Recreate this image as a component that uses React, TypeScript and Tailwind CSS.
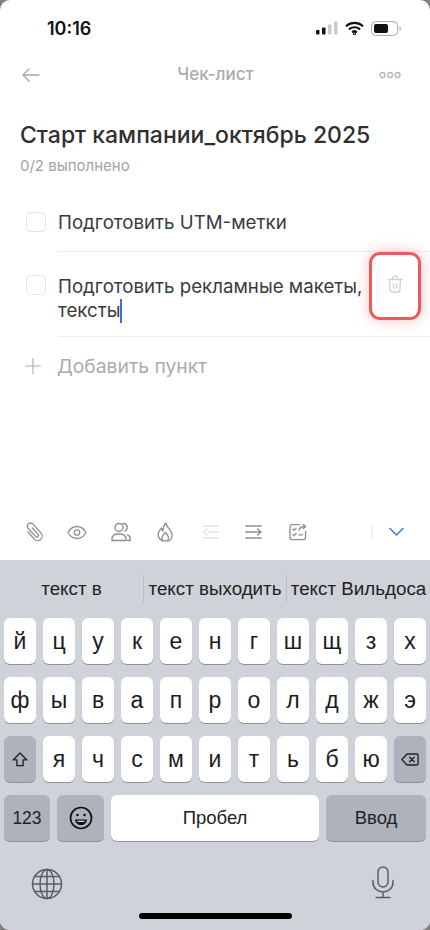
import { Plus } from "lucide-react";

const row1 = ["й", "ц", "у", "к", "е", "н", "г", "ш", "щ", "з", "х"];
const row2 = ["ф", "ы", "в", "а", "п", "р", "о", "л", "д", "ж", "э"];
const row3 = ["я", "ч", "с", "м", "и", "т", "ь", "б", "ю"];

const Key = ({ label }: { label: string }) => (
    <div className="h-[46px] rounded-[6px] bg-white shadow-[0_1px_0_#8f929a] flex items-center justify-center text-[23px] leading-none text-[#1c1c1e]">
        {label}
    </div>
);

const StatusIcons = () => (
    <div className="flex items-center gap-[7px]">
        <svg width="22" height="14" viewBox="0 0 22 14">
            <rect x="0" y="9" width="3.5" height="4.5" rx="1" fill="#111" />
            <rect x="6" y="6.5" width="3.5" height="7" rx="1" fill="#111" />
            <rect x="12" y="3.5" width="3.5" height="10" rx="1" fill="#c9c9c9" />
            <rect x="18" y="0.5" width="3.5" height="13" rx="1" fill="#c9c9c9" />
        </svg>
        <svg width="19" height="14" viewBox="0 0 19 14" fill="none" stroke="#111" strokeWidth="2.1" strokeLinecap="round">
            <path d="M1.6 4.8C6 .9 13 .9 17.4 4.8" />
            <path d="M4.6 7.9c2.7-2.3 7.1-2.3 9.8 0" />
            <path d="M7.7 10.9c1-.8 2.6-.8 3.6 0" />
            <circle cx="9.5" cy="12.6" r=".5" />
        </svg>
        <svg width="30" height="15" viewBox="0 0 30 15" fill="none">
            <rect x="0.6" y="0.6" width="26" height="13.8" rx="4" stroke="#a8a8a8" strokeWidth="1" />
            <rect x="3" y="3" width="14" height="9" rx="2" fill="#111" />
            <path d="M28.5 5.2c.9.3 1.3 1.2 1.3 2.3s-.4 2-1.3 2.3z" fill="#a8a8a8" />
        </svg>
    </div>
);

const Checkbox = () => <div className="w-[20px] h-[20px] shrink-0 rounded-[5px] border border-[#e4e4e6] bg-white" />;

const Toolbar = () => (
    <div className="h-[48px] pb-[8px] flex items-center relative">
        <div className="flex items-center text-[#8f8f8f]">
            <svg className="ml-[24px]" width="20" height="22" viewBox="0 0 20 22" fill="none" stroke="currentColor" strokeWidth="1.3" strokeLinecap="round">
                <g transform="rotate(-42 10 11)">
                    <path d="M5.5 7v9.5a4.5 4.5 0 0 0 9 0V4.5a3.2 3.2 0 0 0-6.400 0v11a1.700 1.700 0 0 0 3.400 0V7" />
                </g>
            </svg>
            <svg className="ml-[23px]" width="20" height="15" viewBox="0 0 22 16" fill="none" stroke="currentColor" strokeWidth="1.4">
                <path d="M1 8c2.600-4.400 5.900-6.600 10-6.600S18.400 3.600 21 8c-2.600 4.400-5.900 6.600-10 6.600S3.600 12.400 1 8z" />
                <circle cx="11" cy="8" r="3" />
            </svg>
            <svg className="ml-[24px]" width="20" height="20" viewBox="0 0 20 20" fill="none" stroke="currentColor" strokeWidth="1.4" strokeLinecap="round">
                <circle cx="8" cy="5.5" r="4" />
                <path d="M11.500 1.700c2.400-.9 4.700.8 4.700 3.600 0 1.800-.9 3.200-2.400 3.800" />
                <path d="M1 18.500v-1.700c0-3 2.600-4.800 7-4.800s7 1.800 7 4.800v1.700z" />
                <path d="M16.500 12.800c1.700.7 2.700 2 2.700 3.700v2h-2.500" />
            </svg>
            <svg className="ml-[26px]" width="17" height="21" viewBox="0 0 18 22" fill="none" stroke="currentColor" strokeWidth="1.4" strokeLinejoin="round">
                <path d="M9.500 1c.4 3.600 2.800 4.800 5 8.200 2.400 3.800 1.600 8.300-1.600 10.600H5.300C2 17.600 .4 14 2 10.200c.7-1.600 1.800-2.800 2.700-3.800.2 1.500.7 2.400 1.500 3C6.200 6.400 7.400 3.200 9.500 1z" />
                <path d="M6.200 19.800c-1.400-2-1.200-4 .1-5.700.8-1 2-1.900 2.800-3.300.7 1.700 2.500 3 3 5 .3 1.500-.1 3-1.200 4" />
            </svg>
            <svg className="ml-[28px] opacity-25" width="17" height="14" viewBox="0 0 17 14" fill="none" stroke="currentColor" strokeWidth="1.4" strokeLinecap="round">
                <path d="M1 1h15.500M1 13h15.500M6.500 7h10M1.500 7l3.500-3M1.500 7l3.500 3" />
            </svg>
            <svg className="ml-[26px]" width="17" height="14" viewBox="0 0 17 14" fill="none" stroke="currentColor" strokeWidth="1.4" strokeLinecap="round">
                <path d="M.7 1h15.500M.7 13h15.500M.7 7h15M16 7l-3.500-3M16 7l-3.500 3" />
            </svg>
            <svg className="ml-[27px]" width="18" height="18" viewBox="0 0 19 18" fill="none" stroke="currentColor" strokeWidth="1.4" strokeLinecap="round" strokeLinejoin="round">
                <path d="M11 1.200H3.500c-1.500 0-2.500 1-2.500 2.500v10.800c0 1.500 1 2.500 2.500 2.500h11.500c1.500 0 2.500-1 2.500-2.500V8" />
                <path d="M4 6l1.200 1.200L7.500 5M4 11.500l1.200 1.200 2.300-2.200M10.500 12h4" />
                <path d="M10.500 7c.6-2.500 2.500-3.800 6.500-3.800M15 1l2.500 2.200L15 5.500" />
            </svg>
        </div>
        <div className="absolute left-[371px] top-[13px] w-[2px] h-[14px] bg-[#efefef]" />
        <svg className="absolute left-[389px] top-[15px]" width="15" height="10" viewBox="0 0 15 10" fill="none" stroke="#3b82e0" strokeWidth="1.6" strokeLinecap="round" strokeLinejoin="round">
            <path d="M1 1.500 7.500 8 14 1.500" />
        </svg>
    </div>
);

const Keyboard = () => (
    <div className="bg-[#cfd2d9] h-[370px] flex flex-col font-['Liberation_Sans',sans-serif]">
        <div className="h-[58px] pt-[15px] flex items-start text-[18.8px] leading-[28px] text-[#222]">
            <div className="w-[143px] text-center">текст в</div>
            <div className="w-px h-[27px] bg-[#b9bcc5]" />
            <div className="w-[142px] text-center whitespace-nowrap">текст выходить</div>
            <div className="w-px h-[27px] bg-[#b9bcc5]" />
            <div className="flex-1 text-center whitespace-nowrap">текст Вильдоса</div>
        </div>
        <div className="px-[4px] flex flex-col gap-[13px]">
            <div className="grid grid-cols-11 gap-x-[7px]">
                {row1.map((k) => <Key key={k} label={k} />)}
            </div>
            <div className="grid grid-cols-11 gap-x-[7px]">
                {row2.map((k) => <Key key={k} label={k} />)}
            </div>
            <div className="grid grid-cols-11 gap-x-[7px]">
                <div className="h-[46px] rounded-[6px] bg-[#aeb2bd] shadow-[0_1px_0_#8f929a] flex items-center justify-center">
                    <svg width="16" height="15" viewBox="0 0 18 17" fill="none" stroke="#222" strokeWidth="1.5" strokeLinejoin="round">
                        <path d="M9 1.200 1.200 9H5.500v6.500h7V9h4.300z" />
                    </svg>
                </div>
                {row3.map((k) => <Key key={k} label={k} />)}
                <div className="h-[46px] rounded-[6px] bg-[#aeb2bd] shadow-[0_1px_0_#8f929a] flex items-center justify-center">
                    <svg width="18" height="13" viewBox="0 0 24 17" fill="none" stroke="#222" strokeWidth="1.8" strokeLinecap="round" strokeLinejoin="round">
                        <path d="M8 1.200h13c1 0 1.800.8 1.800 1.800v11c0 1-.8 1.800-1.800 1.800H8L1.200 8.500z" />
                        <path d="m11.500 5.500 6 6M17.500 5.500l-6 6" />
                    </svg>
                </div>
            </div>
            <div className="flex gap-[7px] h-[46px]">
                <div className="w-[46px] rounded-[6px] bg-[#aeb2bd] shadow-[0_1px_0_#8f929a] flex items-center justify-center text-[17.5px] text-[#222]">123</div>
                <div className="w-[47px] rounded-[6px] bg-[#aeb2bd] shadow-[0_1px_0_#8f929a] flex items-center justify-center">
                    <svg width="24" height="24" viewBox="0 0 24 24" fill="none" stroke="#111" strokeWidth="1.7">
                        <circle cx="12" cy="12" r="10.5" />
                        <circle cx="8.5" cy="9" r="1.3" fill="#111" stroke="none" />
                        <circle cx="15.5" cy="9" r="1.3" fill="#111" stroke="none" />
                        <path d="M6 13.500h12c-.3 3.500-2.800 5.500-6 5.500s-5.700-2-6-5.500z" fill="#111" stroke="none" />
                        <path d="M7.800 14.800h8.400c-.6 1-2 1.300-4.200 1.300s-3.600-.3-4.200-1.300z" fill="#e9e9e9" stroke="none" />
                    </svg>
                </div>
                <div className="w-[208px] rounded-[6px] bg-white shadow-[0_1px_0_#8f929a] flex items-center justify-center text-[18.5px] text-[#222]">Пробел</div>
                <div className="flex-1 rounded-[6px] bg-[#aeb2bd] shadow-[0_1px_0_#8f929a] flex items-center justify-center text-[18.5px] text-[#222]">Ввод</div>
            </div>
        </div>
        <div className="relative flex-1">
            <svg className="absolute left-[31px] top-[27px]" width="32" height="32" viewBox="0 0 32 32" fill="none" stroke="#5a5d63" strokeWidth="1.5">
                <circle cx="16" cy="16" r="14.5" />
                <ellipse cx="16" cy="16" rx="7" ry="14.5" />
                <path d="M16 1.500v29M1.500 16h29M3.800 8.500h24.400M3.800 23.500h24.400" />
            </svg>
            <svg className="absolute left-[371px] top-[25px]" width="24" height="33" viewBox="0 0 24 33" fill="none" stroke="#5a5d63" strokeWidth="1.5" strokeLinecap="round">
                <rect x="7" y="1" width="10" height="20" rx="5" />
                <path d="M2 14.500v2c0 5.500 4.500 9.500 10 9.500s10-4 10-9.500v-2M12 26v5.500M5 31.500h14" />
            </svg>
            <div className="absolute left-[139px] top-[72px] w-[153px] h-[6px] rounded-full bg-black" />
        </div>
    </div>
);

export default function App() {
    return (
        <div className="w-[430px] h-[930px] bg-[#808080] overflow-hidden">
            <div className="w-full h-full rounded-[10px] overflow-hidden bg-white flex flex-col font-['Inter',sans-serif]">
                {/* Status bar */}
                <div className="h-[56px] pl-[47px] pr-[29px] flex items-center justify-between">
                    <span className="text-[18px] font-semibold text-[#111]">10:16</span>
                    <StatusIcons />
                </div>

                {/* Header */}
                <div className="h-[38px] pl-[22px] pr-[29px] flex items-center justify-between">
                    <svg width="18" height="14" viewBox="0 0 18 14" fill="none" stroke="#a9a9a9" strokeWidth="1.3" strokeLinecap="round" strokeLinejoin="round">
                        <path d="M17 7H1M7 1 1 7l6 6" />
                    </svg>
                    <span className="ml-[12px] text-[17px] font-medium text-[#ababab]">Чек-лист</span>
                    <svg width="22" height="8" viewBox="0 0 22 8" fill="none" stroke="#b5b5b5" strokeWidth="1.3">
                        <circle cx="3.5" cy="4" r="2.5" />
                        <circle cx="11" cy="4" r="2.5" />
                        <circle cx="18.5" cy="4" r="2.5" />
                    </svg>
                </div>

                <div className="pt-[25px] px-[20px]">
                    <h1 className="text-[23px] leading-[32px] font-medium text-[#2f2f2f] whitespace-nowrap">Старт кампании_октябрь 2025</h1>
                    <p className="mt-[5px] text-[15px] leading-[20px] text-[#a3a3a3]">0/2 выполнено</p>
                </div>

                {/* Checklist */}
                <div className="pt-[36px] pl-[26px]">
                    <div className="flex gap-[12px]">
                        <Checkbox />
                        <div className="flex-1 min-w-0 border-b border-[#eeeeee] h-[41px] -mt-[1px]">
                            <span className="text-[18.7px] leading-[24px] text-[#3a3a3a]">Подготовить UTM-метки</span>
                        </div>
                    </div>
                    <div className="flex gap-[12px] pt-[23px] relative">
                        <Checkbox />
                        <div className="flex-1 min-w-0 border-b border-[#eeeeee] h-[62px] text-[18.7px] leading-[24px] text-[#3a3a3a] whitespace-nowrap">
                            Подготовить рекламные макеты,
                            <br />
                            тексты<span className="inline-block w-[2px] h-[24px] bg-[#3f6fd8] align-[-6px]" />
                        </div>
                        <div className="absolute left-[343px] top-0 w-[52px] h-[68px] rounded-[11px] border-[3px] border-[#ee5a5c] shadow-[0_0_14px_rgba(236,90,94,0.4)] flex justify-center pt-[20px]">
                            <svg width="16" height="18" viewBox="0 0 16 18" fill="none" stroke="#d2d2d2" strokeWidth="1.3" strokeLinecap="round" strokeLinejoin="round">
                                <path d="M1 4.500h14M5.500 4.500c0-2 1-3.500 2.500-3.500s2.500 1.500 2.500 3.500M2.500 4.500l.6 10.500c0 1.200.8 2 2 2h5.800c1.200 0 2-.8 2-2l.6-10.500M6.500 8.500v5M9.500 8.500v5" />
                            </svg>
                        </div>
                    </div>
                    <div className="flex items-center gap-[11px] h-[58px] -ml-[6px]">
                        <Plus size={26} strokeWidth={1} className="text-[#a9a9a9]" />
                        <span className="text-[19.3px] text-[#ababab]">Добавить пункт</span>
                    </div>
                </div>

                <div className="mt-auto">
                    <Toolbar />
                    <Keyboard />
                </div>
            </div>
        </div>
    );
}
